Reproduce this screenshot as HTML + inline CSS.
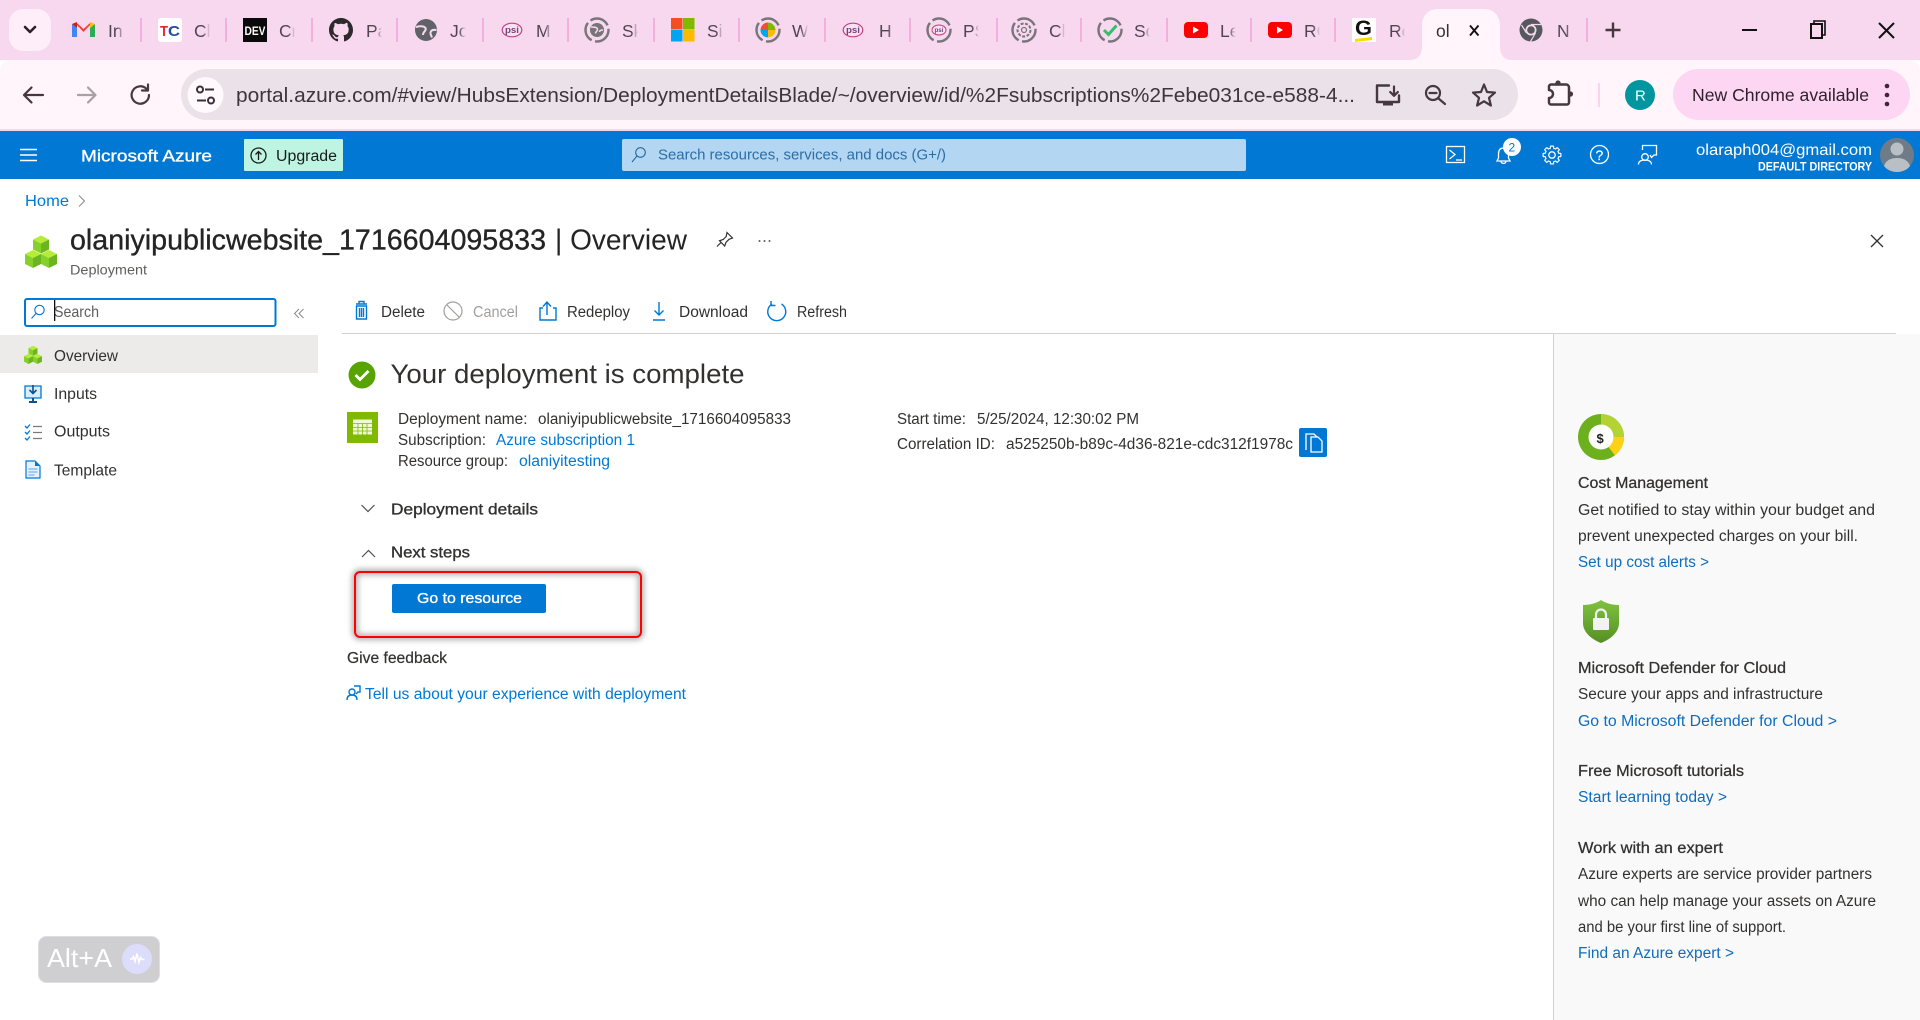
<!DOCTYPE html>
<html lang="en">
<head>
<meta charset="utf-8">
<title>olaniyipublicwebsite_1716604095833 | Overview</title>
<style>
html,body{margin:0;padding:0;width:1920px;height:1020px;overflow:hidden;background:#fff}
svg{display:block}
text{font-family:"Liberation Sans",Arial,sans-serif;white-space:pre}
.t{font-size:15.5px;fill:#323130}
.l{font-size:15.5px;fill:#0078d4}
.p{font-size:15.5px;fill:#0f6cbd}
.s{stroke:currentColor;stroke-width:.35px}
.tab{font-size:17.5px;fill:#4f4650}
.ic{fill:none;stroke:#47373f;stroke-width:2.2;stroke-linecap:round;stroke-linejoin:round}
.w{fill:none;stroke:#fff;stroke-width:1.3}
.b{fill:none;stroke:#0078d4;stroke-width:1.4}
.sep{fill:#f3afe2}
.ring{fill:none;stroke:#77757a;stroke-width:2.4;stroke-dasharray:20 3.500}
</style>
</head>
<body>
<svg width="1920" height="1020" viewBox="0 0 1920 1020" xmlns="http://www.w3.org/2000/svg">
<defs>
<g id="cube"><path d="M0-9 8-5 0-1-8-5Z" fill="#b4ec36"/><path d="M-8-5 0-1V9L-8 5Z" fill="#86d02c"/><path d="M8-5 0-1V9L8 5Z" fill="#6cb51f"/></g>
<g id="cubes"><use href="#cube" x="0" y="-7.5"/><use href="#cube" x="-8" y="7"/><use href="#cube" x="8" y="7"/></g>
<linearGradient id="sh" x1="0" y1="0" x2="0" y2="1"><stop offset="0" stop-color="#7fc241"/><stop offset="1" stop-color="#568f24"/></linearGradient>
<linearGradient id="fd"><stop offset="0" stop-color="#f8d8ef" stop-opacity="0"/><stop offset="1" stop-color="#f8d8ef"/></linearGradient>
<g id="fc"><rect width="7" height="24" fill="url(#fd)"/><rect x="7" width="9" height="24" fill="#f8d8ef"/></g>
<filter id="blur" x="-10%" y="-20%" width="120%" height="140%"><feGaussianBlur stdDeviation="3"/></filter>
</defs>

<!-- tab strip -->
<rect width="1920" height="60" fill="#f8d8ef"/>
<rect x="9" y="9" width="42" height="42" rx="14" fill="#fdeef9"/>
<path d="M25 27l5 5 5-5" fill="none" stroke="#2a1f2a" stroke-width="2.6" stroke-linecap="round" stroke-linejoin="round"/>

<g class="sep">
<rect x="140" y="18" width="2" height="24"/><rect x="225" y="18" width="2" height="24"/><rect x="311" y="18" width="2" height="24"/><rect x="396" y="18" width="2" height="24"/><rect x="482" y="18" width="2" height="24"/><rect x="567" y="18" width="2" height="24"/><rect x="653" y="18" width="2" height="24"/><rect x="738" y="18" width="2" height="24"/><rect x="824" y="18" width="2" height="24"/><rect x="909" y="18" width="2" height="24"/><rect x="996" y="18" width="2" height="24"/><rect x="1080" y="18" width="2" height="24"/><rect x="1166" y="18" width="2" height="24"/><rect x="1250" y="18" width="2" height="24"/><rect x="1334" y="18" width="2" height="24"/><rect x="1586" y="18" width="2" height="24"/>
</g>

<!-- gmail -->
<path d="M72 24v13h5V28Z" fill="#4285f4"/><path d="M95 24v13h-5V28Z" fill="#34a853"/><path d="M77 23l6.500 6 6.500-6 2 0-8.500 9-8.500-9Z" fill="#ea4335"/><path d="M72 24l5-2v6Z" fill="#c5221f"/><path d="M95 24l-5-2v6Z" fill="#fbbc04"/>
<text class="tab" x="108" y="37">In</text>
<!-- TC -->
<rect x="158" y="18" width="24" height="24" rx="3" fill="#fff"/>
<text x="160" y="36" font-size="15" font-weight="700" fill="#e0262b" textLength="8" lengthAdjust="spacingAndGlyphs">T</text>
<text x="168" y="36" font-size="15" font-weight="700" fill="#1c4fa0" textLength="12" lengthAdjust="spacingAndGlyphs">C</text>
<text class="tab" x="194" y="37">Cl</text>
<!-- DEV -->
<rect x="243" y="18" width="24" height="24" fill="#0a0a0a"/>
<text x="244.500" y="35" font-size="12" font-weight="700" fill="#fff" textLength="21" lengthAdjust="spacingAndGlyphs">DEV</text>
<text class="tab" x="279" y="37">Cr</text>
<!-- github -->
<path transform="translate(329 18) scale(1.5)" fill="#2d2a2e" d="M8 0C3.58 0 0 3.58 0 8c0 3.54 2.29 6.53 5.47 7.59.4.07.55-.17.55-.38 0-.19-.01-.82-.01-1.49-2.01.37-2.53-.49-2.69-.94-.09-.23-.48-.94-.82-1.13-.28-.15-.68-.52-.01-.53.63-.01 1.08.58 1.23.82.72 1.21 1.87.87 2.33.66.07-.52.28-.87.51-1.07-1.78-.2-3.64-.89-3.64-3.95 0-.87.31-1.59.82-2.15-.08-.2-.36-1.02.08-2.12 0 0 .67-.21 2.2.82.64-.18 1.32-.27 2-.27.68 0 1.36.09 2 .27 1.53-1.04 2.2-.82 2.2-.82.44 1.1.16 1.92.08 2.12.51.56.82 1.27.82 2.15 0 3.07-1.87 3.75-3.65 3.95.29.25.54.73.54 1.48 0 1.07-.01 1.93-.01 2.2 0 .21.15.46.55.38A8.013 8.013 0 0016 8c0-4.42-3.58-8-8-8z"/>
<text class="tab" x="366" y="37">Pa</text>
<!-- globe -->
<circle cx="426" cy="30" r="11" fill="#5f6368"/>
<path d="M416 27c4-1 8-1 9.500 1 1.500 3-2.500 3-2.500 7M436.500 30c-3-.5-5.500 0-6 2.500-.3 2 1 3.500 1.500 5" fill="none" stroke="#f8d8ef" stroke-width="2"/>
<text class="tab" x="450" y="37">Jo</text>
<!-- psi -->
<ellipse cx="512" cy="30" rx="9.800" ry="6.800" fill="#f6e3f2" stroke="#c2407f" stroke-width="1.200"/>
<text x="505" y="33" font-size="9" font-weight="700" fill="#7a3f7c" textLength="14" lengthAdjust="spacingAndGlyphs">psi</text>
<text class="tab" x="536" y="37">M</text>
<!-- ring globe -->
<circle cx="597" cy="30" r="11.500" class="ring"/><circle cx="597" cy="30" r="7" fill="#77757a"/><path d="M591 27c3 0 6 0 6.500 2 .3 2-2 2.500-2 4.500M603 30c-2 0-3.500.5-3.500 2" fill="none" stroke="#f8d8ef" stroke-width="1.500"/>
<text class="tab" x="622" y="37">Sk</text>
<!-- MS -->
<rect x="671" y="18" width="11.500" height="11.500" fill="#f25022"/><rect x="683" y="18" width="11.500" height="11.500" fill="#7fba00"/><rect x="671" y="30" width="11.500" height="11.500" fill="#00a4ef"/><rect x="683" y="30" width="11.500" height="11.500" fill="#ffb900"/>
<text class="tab" x="707" y="37">Si</text>
<!-- ring ms -->
<circle cx="768" cy="30" r="11.500" class="ring"/><circle cx="768" cy="30" r="7.500" fill="#fff"/><path d="M768 30V22.500A7.500 7.500 0 0 0 760.500 30Z" fill="#e8542c"/><path d="M768 30V22.500A7.500 7.500 0 0 1 775.500 30Z" fill="#7fba00"/><path d="M768 30H760.500A7.500 7.500 0 0 0 768 37.500Z" fill="#00a4ef"/><path d="M768 30H775.500A7.500 7.500 0 0 1 768 37.500Z" fill="#ffb900"/>
<text class="tab" x="792" y="37">W</text>
<!-- psi 2 -->
<ellipse cx="853" cy="30" rx="9.800" ry="6.800" fill="#f6e3f2" stroke="#c2407f" stroke-width="1.200"/>
<text x="846" y="33" font-size="9" font-weight="700" fill="#7a3f7c" textLength="14" lengthAdjust="spacingAndGlyphs">psi</text>
<text class="tab" x="879" y="37">H</text>
<!-- ring psi -->
<circle cx="939" cy="30" r="11.500" class="ring"/>
<ellipse cx="939" cy="30" rx="7" ry="5" fill="#f6e3f2" stroke="#c2407f" stroke-width="1"/>
<text x="934.500" y="32" font-size="6" font-weight="700" fill="#7a3f7c" textLength="9" lengthAdjust="spacingAndGlyphs">psi</text>
<text class="tab" x="963" y="37">PS</text>
<!-- ring openai -->
<circle cx="1024" cy="30" r="11.500" class="ring"/><circle cx="1024" cy="30" r="6.500" fill="none" stroke="#77757a" stroke-width="2" stroke-dasharray="3 1.500"/><circle cx="1024" cy="30" r="2.500" fill="none" stroke="#77757a" stroke-width="1.200"/>
<text class="tab" x="1049" y="37">Cl</text>
<!-- ring check -->
<circle cx="1110" cy="30" r="11.500" class="ring"/><path d="M1104 30l4.500 4.500 8-9" fill="none" stroke="#2fc26a" stroke-width="3"/>
<text class="tab" x="1134" y="37">Sc</text>
<!-- YT -->
<rect x="1184" y="22" width="24" height="16" rx="4" fill="#f00"/><path d="M1193 26.500v7l6-3.500Z" fill="#fff"/>
<text class="tab" x="1220" y="37">Le</text>
<rect x="1268" y="22" width="24" height="16" rx="4" fill="#f00"/><path d="M1277 26.500v7l6-3.500Z" fill="#fff"/>
<text class="tab" x="1304" y="37">RC</text>
<!-- G -->
<rect x="1352" y="18" width="24" height="24" fill="#fff"/>
<text x="1355" y="35" font-size="21" font-weight="700" fill="#111" textLength="17" lengthAdjust="spacingAndGlyphs">G</text>
<path d="M1355 39l17-2v3l-17 2Z" fill="#f5df00"/>
<text class="tab" x="1389" y="37">Re</text>
<text class="tab" x="1557" y="37">N</text>
<use href="#fc" x="117" y="20"/><use href="#fc" x="203" y="20"/><use href="#fc" x="288" y="20"/><use href="#fc" x="375" y="20"/><use href="#fc" x="459" y="20"/><use href="#fc" x="545" y="20"/><use href="#fc" x="631" y="20"/><use href="#fc" x="716" y="20"/><use href="#fc" x="801" y="20"/><use href="#fc" x="888" y="20"/><use href="#fc" x="972" y="20"/><use href="#fc" x="1058" y="20"/><use href="#fc" x="1143" y="20"/><use href="#fc" x="1229" y="20"/><use href="#fc" x="1313" y="20"/><use href="#fc" x="1398" y="20"/><use href="#fc" x="1566" y="20"/>
<!-- active tab -->
<path d="M1410 60c9 0 12-6 12-14V26c0-10 6-17 16-17h46c10 0 16 7 16 17v20c0 8 3 14 12 14Z" fill="#fff5fa"/>
<text class="tab" x="1436" y="37" style="fill:#333">ol</text>
<path d="M1470 25.500l8.500 10m0-10l-8.500 10" stroke="#111" stroke-width="1.900" fill="none"/>
<!-- chrome -->
<circle cx="1531" cy="30" r="11.500" fill="#55595e"/><circle cx="1531" cy="30" r="5.500" fill="#f8d8ef"/><circle cx="1531" cy="30" r="3.800" fill="#55595e"/>
<path d="M1531 24.500h10M1526.500 33l-5 -8M1535.500 33l-5 8.500" stroke="#f8d8ef" stroke-width="1.200"/>
<path d="M1613 22.500v15m-7.500-7.500h15" stroke="#47373f" stroke-width="2.400" fill="none"/>
<!-- window controls -->
<path d="M1742 30h15" stroke="#111" stroke-width="2"/>
<path d="M1811 24h11v14h-11Z" fill="none" stroke="#111" stroke-width="2"/><path d="M1814 24v-3h11v14h-3" fill="none" stroke="#111" stroke-width="1.600"/>
<path d="M1879 23l15 15m0-15l-15 15" stroke="#111" stroke-width="2" fill="none"/>

<!-- toolbar -->
<path d="M0 72Q0 60 12 60H1908Q1920 60 1920 72V129H0Z" fill="#fff5fa"/>
<rect y="129" width="1920" height="2" fill="#efd9e5"/>
<path d="M43 95H24.500M31.500 87.500L24 95l7.500 7.500" class="ic"/>
<path d="M78 95H95.500M88 87.500l7.500 7.500-7.500 7.500" class="ic" style="stroke:#a8a0a6"/>
<path d="M149 95a8.700 8.700 0 1 1-2.800-6.400M148 84.500v6h-6" class="ic"/>
<rect x="181" y="69" width="1337" height="51" rx="25.500" fill="#ebe1e9"/>
<circle cx="205.500" cy="95" r="18" fill="#fff8fc"/>
<g fill="none" stroke="#3a2f38" stroke-width="2"><circle cx="200" cy="89.500" r="3"/><path d="M205 89.500h9"/><circle cx="211" cy="100.500" r="3"/><path d="M197 100.500h9"/></g>
<text x="236" y="102" font-size="20.500" fill="#3f343c" textLength="1119" lengthAdjust="spacingAndGlyphs">portal.azure.com/#view/HubsExtension/DeploymentDetailsBlade/~/overview/id/%2Fsubscriptions%2Febe031ce-e588-4...</text>
<!-- omnibox right icons -->
<path d="M1389 85.500h-12v16.500h22v-6.500" class="ic" style="stroke-width:2.400"/>
<path d="M1394 86.500v9m-3.800-3.500l3.800 3.800 3.800-3.800" class="ic" style="stroke-width:2.200"/>
<rect x="1383" y="102" width="10" height="3.500" fill="#47373f"/>
<circle cx="1433" cy="93" r="7" class="ic"/><path d="M1438.500 98.500l6.500 5.500M1429.500 93h7" class="ic"/>
<path d="M1484 84.500l3 7.500 8 .6-6 5.200 1.900 7.700-6.900-4.200-6.900 4.200 1.900-7.700-6-5.200 8-.6Z" class="ic"/>
<path d="M1551 84.500h15a3 3 0 0 1 3 3v15a2 2 0 0 1-2 2h-16a2 2 0 0 1-2-2v-4.500a4 4 0 0 0 0-8v-3.500a2 2 0 0 1 2-2Z" class="ic" style="stroke-width:2.500"/>
<circle cx="1558" cy="83" r="2.600" fill="#47373f"/><circle cx="1570.500" cy="94" r="2.600" fill="#47373f"/>
<rect x="1598" y="83" width="2" height="24" fill="#fbd3ee"/>
<circle cx="1640" cy="95" r="15" fill="#00959f"/>
<text x="1635" y="100.500" font-size="15" fill="#fff">R</text>
<rect x="1673" y="69" width="237" height="51" rx="25.500" fill="#fcd6f2"/>
<text x="1692" y="101" font-size="17.500" fill="#2e1f2b" textLength="177" lengthAdjust="spacingAndGlyphs">New Chrome available</text>
<g fill="#3e2538"><circle cx="1887" cy="86" r="2.300"/><circle cx="1887" cy="95" r="2.300"/><circle cx="1887" cy="104" r="2.300"/></g>

<!-- azure header -->
<rect y="131" width="1920" height="48" fill="#0078d4"/>
<path d="M20 149.500h17M20 155h17M20 160.500h17" stroke="#fff" stroke-width="1.500"/>
<text x="81" y="161.500" font-size="17" fill="#fff" class="s" color="#fff" textLength="131" lengthAdjust="spacingAndGlyphs">Microsoft Azure</text>
<rect x="244" y="139" width="99" height="32" rx="1" fill="#bdf5e2"/>
<circle cx="258.500" cy="155.500" r="7.500" fill="none" stroke="#1b1b1b" stroke-width="1.300"/><path d="M258.500 160v-8.500m-3 3l3-3 3 3" fill="none" stroke="#1b1b1b" stroke-width="1.300"/>
<text x="276" y="161" font-size="15.500" fill="#1b1b1b" textLength="61" lengthAdjust="spacingAndGlyphs">Upgrade</text>
<rect x="622" y="139" width="624" height="32" rx="2" fill="#b3d6f2"/>
<circle cx="640.500" cy="152.500" r="4.800" fill="none" stroke="#2468a0" stroke-width="1.100"/><path d="M637 156l-5 6" stroke="#2468a0" stroke-width="1.100"/>
<text x="658" y="159.500" font-size="15" fill="#2b6ea6" textLength="288" lengthAdjust="spacingAndGlyphs">Search resources, services, and docs (G+/)</text>
<!-- header icons -->
<rect x="1446.500" y="146.500" width="18" height="16" class="w"/><path d="M1449.500 150l5.500 4.500-5.500 4.500M1456 160h6" class="w"/>
<path d="M1503.500 148c-3.500 0-5 2.500-5 6v4l-1.500 3h13l-1.500-3v-4c0-3.500-1.500-6-5-6ZM1501 161.500c.5 2.500 4.500 2.500 5 0" class="w"/>
<circle cx="1512" cy="147" r="9" fill="#fff"/><text x="1508.500" y="151.500" font-size="12" fill="#0078d4">2</text>
<g transform="translate(1552 155)">
<g fill="#fff"><circle r="7.500"/><rect x="-2.200" y="-9.500" width="4.400" height="19" rx="1"/><rect x="-2.200" y="-9.500" width="4.400" height="19" rx="1" transform="rotate(45)"/><rect x="-2.200" y="-9.500" width="4.400" height="19" rx="1" transform="rotate(90)"/><rect x="-2.200" y="-9.500" width="4.400" height="19" rx="1" transform="rotate(135)"/></g>
<g fill="#0078d4"><circle r="6.400"/><rect x="-1.100" y="-8.300" width="2.200" height="16.600"/><rect x="-1.100" y="-8.300" width="2.200" height="16.600" transform="rotate(45)"/><rect x="-1.100" y="-8.300" width="2.200" height="16.600" transform="rotate(90)"/><rect x="-1.100" y="-8.300" width="2.200" height="16.600" transform="rotate(135)"/></g>
<circle r="3.200" class="w"/>
</g>
<circle cx="1599.500" cy="154.500" r="9" class="w"/><text x="1595.500" y="160" font-size="14" fill="#fff" class="s" color="#fff" style="stroke-width:.2px">?</text>
<path d="M1642.500 150v-4.500h14v9.500h-2.500l-2.500 2.500-1.500-2.500" class="w"/><circle cx="1645" cy="157" r="3.300" class="w"/><path d="M1638.500 164.500c0-3 2.500-4.500 6.500-4.500s6.500 1.500 6.500 4.500" class="w"/>
<text x="1696" y="155" font-size="16" fill="#fff" textLength="176" lengthAdjust="spacingAndGlyphs">olaraph004@gmail.com</text>
<text x="1758" y="170.500" font-size="11.500" font-weight="700" fill="#fff" textLength="114" lengthAdjust="spacingAndGlyphs">DEFAULT DIRECTORY</text>
<circle cx="1897" cy="155" r="17" fill="#6f7c88"/><circle cx="1897" cy="149" r="6.500" fill="#b9bfc5"/><path d="M1884 166c2-6 7-8 13-8s11 2 13 8c-3 4-8 6-13 6s-10-2-13-6Z" fill="#b9bfc5"/>

<!-- breadcrumb + title -->
<text x="25" y="206" font-size="16" fill="#0078d4" textLength="44" lengthAdjust="spacingAndGlyphs">Home</text>
<path d="M79 195.500l5.500 5.500-5.500 5.500" fill="none" stroke="#8a8886" stroke-width="1"/>
<use href="#cubes" transform="translate(41 252) scale(1)"/>
<text x="70" y="249.500" font-size="29" fill="#242424" class="s" color="#242424" textLength="476" lengthAdjust="spacingAndGlyphs">olaniyipublicwebsite_1716604095833</text>
<text x="555" y="249.500" font-size="29" fill="#242424" textLength="132" lengthAdjust="spacingAndGlyphs">| Overview</text>
<text x="70" y="274.500" font-size="14" fill="#605e5c" textLength="77" lengthAdjust="spacingAndGlyphs">Deployment</text>
<path d="M726 236l5.500 5.500-3.500 1.300-3 3-1.300 3.700-5.200-5.200 3.700-1.300 3-3ZM720 246l-4 4" fill="none" stroke="#323130" stroke-width="1.200" transform="translate(1 -3.500)"/>
<g fill="#605e5c"><circle cx="759.500" cy="241" r="1"/><circle cx="764.500" cy="241" r="1"/><circle cx="769.500" cy="241" r="1"/></g>
<path d="M1871 235l12 12m0-12l-12 12" stroke="#323130" stroke-width="1.300" fill="none"/>

<!-- left nav -->
<rect x="25" y="299" width="250.500" height="27" rx="2" fill="#fff" stroke="#0078d4" stroke-width="2"/>
<circle cx="39.500" cy="310" r="4.700" fill="none" stroke="#0078d4" stroke-width="1.100"/><path d="M36 313.500l-4.500 5" stroke="#0078d4" stroke-width="1.100"/>
<text x="54" y="317" font-size="16" fill="#605e5c" textLength="45" lengthAdjust="spacingAndGlyphs">Search</text>
<rect x="54" y="300" width="1.300" height="21" fill="#111"/>
<path d="M299 309l-4.500 4.500 4.500 4.500M303.500 309l-4.500 4.500 4.500 4.500" fill="none" stroke="#8a8886" stroke-width="1"/>
<rect y="335" width="318" height="38" fill="#edebe9"/>
<use href="#cubes" transform="translate(33 355) scale(.56)"/>
<text x="54" y="361" font-size="16" fill="#323130" textLength="64" lengthAdjust="spacingAndGlyphs">Overview</text>
<path d="M25 386h16v12H25Z" fill="#d9edfb" stroke="#0078d4" stroke-width="1.300"/><path d="M33 385v8m-3.500-3l3.500 3.500 3.500-3.500" fill="none" stroke="#0f4f8c" stroke-width="1.600"/><path d="M33 398v4m-4 0h8" stroke="#0f4f8c" stroke-width="2"/>
<text x="54" y="399" font-size="16" fill="#323130" textLength="43" lengthAdjust="spacingAndGlyphs">Inputs</text>
<path d="M25 426l2 2 3-3.500M25 432l2 2 3-3.500M25 438l2 2 3-3.500" fill="none" stroke="#0078d4" stroke-width="1.300"/><path d="M33 426.500h9M33 432.500h9M33 438.500h9" stroke="#7a7a7a" stroke-width="1.300"/>
<text x="54" y="436.500" font-size="16" fill="#323130" textLength="56" lengthAdjust="spacingAndGlyphs">Outputs</text>
<path d="M26 461h9l5 5v12H26Z" fill="#e6f2fb" stroke="#0078d4" stroke-width="1.200"/><path d="M35 461v5h5Z" fill="#0078d4"/><path d="M28.500 469h9M28.500 472h9M28.500 475h6" stroke="#5ea0ef" stroke-width="1"/>
<text x="54" y="475.500" font-size="16" fill="#323130" textLength="63" lengthAdjust="spacingAndGlyphs">Template</text>

<!-- command bar -->
<path d="M356 304h11M359 304v-2.500h5v2.500M356.500 306h10v13h-10ZM359.500 308v9M361.500 308v9M363.500 308v9" class="b" stroke-width="1" fill="#e9f3fc"/>
<text x="381" y="317" font-size="15.500" fill="#323130" textLength="44" lengthAdjust="spacingAndGlyphs">Delete</text>
<circle cx="453" cy="311" r="9" fill="none" stroke="#a19f9d" stroke-width="1.200"/><path d="M447 305l12 12" stroke="#a19f9d" stroke-width="1.200"/>
<text x="473" y="317" font-size="15.500" fill="#a19f9d" textLength="45" lengthAdjust="spacingAndGlyphs">Cancel</text>
<path d="M543 308h-3v12h16v-12h-3M547 315v-13m-4 4.500l4-4.500 4 4.500" class="b"/>
<text x="567" y="317" font-size="15.500" fill="#323130" textLength="63" lengthAdjust="spacingAndGlyphs">Redeploy</text>
<path d="M659 302v13m-4.500-4.500l4.500 4.500 4.500-4.500M653 320h12" class="b"/>
<text x="679" y="317" font-size="15.500" fill="#323130" textLength="69" lengthAdjust="spacingAndGlyphs">Download</text>
<path d="M772 304a9 9 0 1 0 9.500 0M771 301v4.500h4.500" class="b"/>
<text x="797" y="317" font-size="15.500" fill="#323130" textLength="50" lengthAdjust="spacingAndGlyphs">Refresh</text>

<!-- main -->
<circle cx="362" cy="375" r="13.500" fill="#57a300"/><path d="M355.500 375l4.500 4.500 8.500-8.500" fill="none" stroke="#fff" stroke-width="2.800"/>
<text x="390.500" y="383" font-size="27" fill="#323130" textLength="354" lengthAdjust="spacingAndGlyphs">Your deployment is complete</text>
<rect x="347" y="412" width="31" height="31" fill="#7fba00"/>
<rect x="353" y="419.500" width="19" height="15" fill="#f0f7dc"/><path d="M353 423.500h19M353 427.500h19M353 431h19M358 423.500v11M362.500 423.500v11M367 423.500v11" stroke="#7fba00" stroke-width=".8"/>
<text class="t" x="398" y="424" textLength="129.500" lengthAdjust="spacingAndGlyphs">Deployment name:</text>
<text class="t" x="538" y="424" textLength="253" lengthAdjust="spacingAndGlyphs">olaniyipublicwebsite_1716604095833</text>
<text class="t" x="398" y="445" textLength="88" lengthAdjust="spacingAndGlyphs">Subscription:</text>
<text class="l" x="496" y="445" textLength="139" lengthAdjust="spacingAndGlyphs">Azure subscription 1</text>
<text class="t" x="398" y="466" textLength="110" lengthAdjust="spacingAndGlyphs">Resource group:</text>
<text class="l" x="519" y="466" textLength="91" lengthAdjust="spacingAndGlyphs">olaniyitesting</text>
<text class="t" x="897" y="424" textLength="69" lengthAdjust="spacingAndGlyphs">Start time:</text>
<text class="t" x="977" y="424" textLength="162" lengthAdjust="spacingAndGlyphs">5/25/2024, 12:30:02 PM</text>
<text class="t" x="897" y="449" textLength="98" lengthAdjust="spacingAndGlyphs">Correlation ID:</text>
<text class="t" x="1006" y="449" textLength="287" lengthAdjust="spacingAndGlyphs">a525250b-b89c-4d36-821e-cdc312f1978c</text>
<rect x="1299" y="428" width="28" height="29" rx="2" fill="#0078d4"/>
<path d="M1306 450v-16h8l3 3" fill="none" stroke="#fff" stroke-width="1.300"/><path d="M1311 437h7l4 4v11h-11Z" fill="#0078d4" stroke="#fff" stroke-width="1.300"/>

<path d="M361.500 505l6.500 6.500 6.500-6.500" fill="none" stroke="#505050" stroke-width="1.200"/>
<text x="391" y="514.500" font-size="16" fill="#323130" class="s" color="#323130" textLength="147" lengthAdjust="spacingAndGlyphs">Deployment details</text>
<path d="M362 557l6.500-6.500 6.500 6.500" fill="none" stroke="#505050" stroke-width="1.200"/>
<text x="391" y="557.500" font-size="16" fill="#323130" class="s" color="#323130" textLength="79" lengthAdjust="spacingAndGlyphs">Next steps</text>

<rect x="355" y="572" width="286" height="65" rx="5" fill="none" stroke="#777" stroke-width="6" filter="url(#blur)" opacity=".6"/>
<rect x="355" y="572" width="286" height="65" rx="5" fill="none" stroke="#f00" stroke-width="2"/>
<rect x="392" y="584" width="154" height="29" rx="2" fill="#0078d4"/>
<text x="417" y="603" font-size="15" fill="#fff" class="s" color="#fff" textLength="105" lengthAdjust="spacingAndGlyphs">Go to resource</text>
<text x="347" y="663" font-size="15.500" fill="#323130" class="s" color="#323130" style="stroke-width:.2px" textLength="100" lengthAdjust="spacingAndGlyphs">Give feedback</text>
<circle cx="352" cy="692" r="3" class="b" stroke-width="1"/><path d="M347 700c0-3.500 2-5 5-5s5 1.500 5 5M354 686h6v6h-2l-2 2" class="b" stroke-width="1"/>
<text class="l" x="365" y="699" textLength="321" lengthAdjust="spacingAndGlyphs">Tell us about your experience with deployment</text>

<!-- right panel -->
<rect x="1554" y="334" width="366" height="686" fill="#f9f9f9"/>
<rect x="342" y="333" width="1554" height="1" fill="#d2d2d2"/>
<rect x="1553" y="334" width="1" height="686" fill="#d2d2d2"/>
<circle cx="1601" cy="437" r="23" fill="#6cb01e"/>
<path d="M1601 437V414A23 23 0 0 1 1624 437Z" fill="#b3d335"/><path d="M1601 437H1624A23 23 0 0 1 1615 455.500Z" fill="#fcd116"/>
<circle cx="1601" cy="437" r="12.500" fill="#fff"/>
<text x="1596.500" y="443" font-size="13" font-weight="700" fill="#222">$</text>
<text x="1578" y="488" font-size="15.500" fill="#323130" class="s" color="#323130" style="stroke-width:.25px" textLength="130" lengthAdjust="spacingAndGlyphs">Cost Management</text>
<text class="t" x="1578" y="515" textLength="297" lengthAdjust="spacingAndGlyphs">Get notified to stay within your budget and</text>
<text class="t" x="1578" y="541" textLength="280" lengthAdjust="spacingAndGlyphs">prevent unexpected charges on your bill.</text>
<text class="p" x="1578" y="567" textLength="131" lengthAdjust="spacingAndGlyphs">Set up cost alerts &gt;</text>
<path d="M1601 600c4 3 11 5 18 5v18c0 9-8 16-18 20-10-4-18-11-18-20v-18c7 0 14-2 18-5Z" fill="url(#sh)"/>
<rect x="1593" y="618" width="16" height="12" rx="1" fill="#f2f2f2"/><path d="M1596 618v-3.500a5 5 0 0 1 10 0v3.500" fill="none" stroke="#f2f2f2" stroke-width="2.200"/>
<text x="1578" y="673" font-size="15.500" fill="#323130" class="s" color="#323130" style="stroke-width:.25px" textLength="208" lengthAdjust="spacingAndGlyphs">Microsoft Defender for Cloud</text>
<text class="t" x="1578" y="699" textLength="245" lengthAdjust="spacingAndGlyphs">Secure your apps and infrastructure</text>
<text class="p" x="1578" y="726" textLength="259" lengthAdjust="spacingAndGlyphs">Go to Microsoft Defender for Cloud &gt;</text>
<text x="1578" y="776" font-size="15.500" fill="#323130" class="s" color="#323130" style="stroke-width:.25px" textLength="166" lengthAdjust="spacingAndGlyphs">Free Microsoft tutorials</text>
<text class="p" x="1578" y="802" textLength="149" lengthAdjust="spacingAndGlyphs">Start learning today &gt;</text>
<text x="1578" y="853" font-size="15.500" fill="#323130" class="s" color="#323130" style="stroke-width:.25px" textLength="145" lengthAdjust="spacingAndGlyphs">Work with an expert</text>
<text class="t" x="1578" y="879" textLength="294" lengthAdjust="spacingAndGlyphs">Azure experts are service provider partners</text>
<text class="t" x="1578" y="906" textLength="298" lengthAdjust="spacingAndGlyphs">who can help manage your assets on Azure</text>
<text class="t" x="1578" y="932" textLength="208" lengthAdjust="spacingAndGlyphs">and be your first line of support.</text>
<text class="p" x="1578" y="958" textLength="156" lengthAdjust="spacingAndGlyphs">Find an Azure expert &gt;</text>

<!-- Alt+A -->
<rect x="38.500" y="936.500" width="121" height="46" rx="8" fill="#cfcfd2" stroke="#dedee0" stroke-width="1"/>
<text x="47" y="967" font-size="26" fill="#fff" textLength="65" lengthAdjust="spacingAndGlyphs">Alt+A</text>
<circle cx="137" cy="959" r="15" fill="#dcdcfb"/>
<path d="M130 959h2l1.500-2.500 1.500 5 2-8 2 9 1.500-5 1.500 2h2.500" fill="none" stroke="#fff" stroke-width="1.500"/>
</svg>
</body>
</html>
